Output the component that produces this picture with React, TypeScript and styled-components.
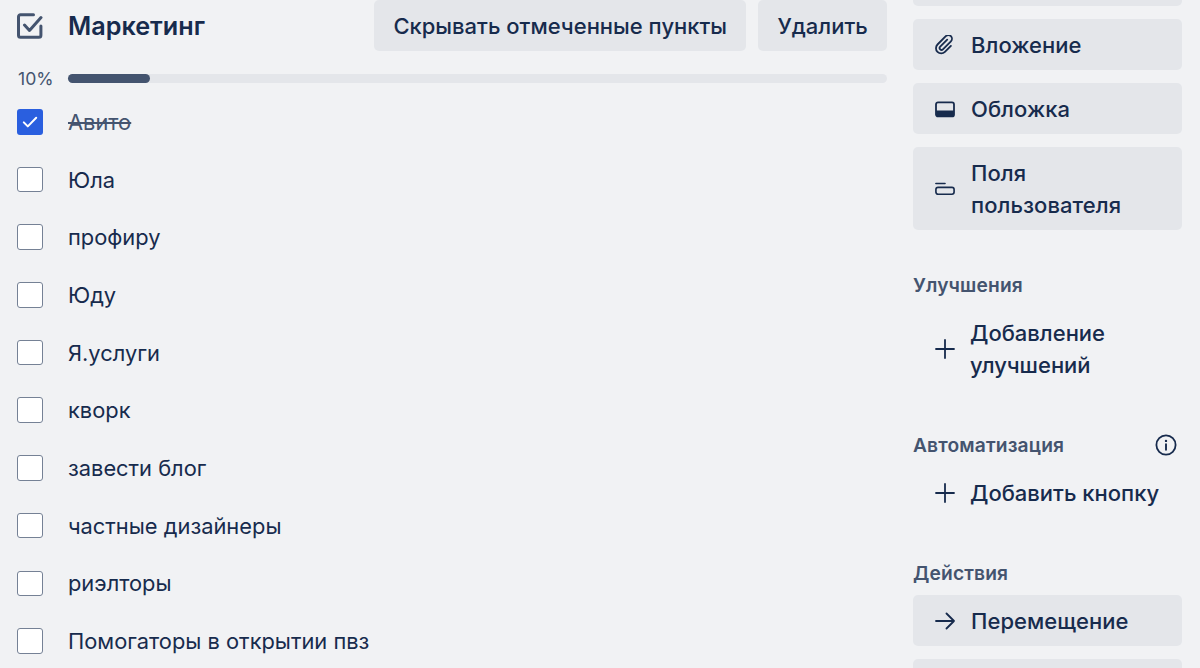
import React from 'react';
import styled, { createGlobalStyle } from 'styled-components';

const GlobalStyle = createGlobalStyle`
  html, body {
    margin: 0;
    padding: 0;
    background: #f1f2f4;
  }
  * {
    box-sizing: border-box;
  }
`;

const Page = styled.div`
  display: flex;
  gap: 26px;
  width: 1200px;
  height: 668px;
  overflow: hidden;
  padding: 0 18px 0 17px;
  background: #f1f2f4;
  color: #172b4d;
  font-family: 'Inter', 'Liberation Sans', sans-serif;
  font-size: 22px;
  line-height: 32px;
`;

const Main = styled.main`
  flex: 1;
  min-width: 0;
`;

const Header = styled.div`
  display: flex;
  align-items: center;
  height: 51px;
  gap: 12px;
`;

const HeaderIcon = styled.div`
  width: 39px;
  display: flex;
  color: #44546f;
`;

const Title = styled.h2`
  flex: 1;
  margin: 0;
  font-size: 25.2px;
  font-weight: 600;
  line-height: 32px;
`;

const Button = styled.button`
  height: 51.2px;
  padding: 0 19.2px;
  border: none;
  border-radius: 5px;
  background: #e4e6ea;
  color: #172b4d;
  font: inherit;
  font-weight: 500;
`;

const Progress = styled.div`
  display: flex;
  align-items: center;
  height: 42px;
  padding-top: 13px;
`;

const Percent = styled.span`
  width: 51px;
  padding-left: 1px;
  color: #44546f;
  font-size: 17.6px;
`;

const Track = styled.div`
  flex: 1;
  height: 9px;
  border-radius: 5px;
  background: #e4e6ea;
`;

const Fill = styled.div`
  height: 100%;
  border-radius: 5px;
  background: #44546f;
`;

const Row = styled.div`
  display: flex;
  align-items: center;
  height: 57.7px;
`;

const Box = styled.span<{ $checked?: boolean }>`
  width: 25.6px;
  height: 25.6px;
  flex: none;
  display: flex;
  align-items: center;
  justify-content: center;
  margin-right: 25.4px;
  border-radius: 3px;
  border: ${p => (p.$checked ? 'none' : '1.6px solid #758195')};
  background: ${p => (p.$checked ? '#2a5fdf' : '#ffffff')};
`;

const ItemText = styled.span<{ $done?: boolean }>`
  font-size: 21.85px;
  color: ${p => (p.$done ? '#44546f' : '#172b4d')};
  text-decoration: ${p => (p.$done ? 'line-through' : 'none')};
`;

const Sidebar = styled.aside`
  width: 269px;
  flex: none;
  align-self: flex-start;
  margin-top: -44.8px;
  display: flex;
  flex-direction: column;
`;

const ActionStack = styled.div`
  display: flex;
  flex-direction: column;
  gap: 12.8px;
`;

const ActionButton = styled.div<{ $plain?: boolean }>`
  display: flex;
  align-items: center;
  gap: ${p => (p.$plain ? '15px' : '16px')};
  min-height: 51.2px;
  padding: 9.6px 8px 9.6px 22px;
  border-radius: 5px;
  background: ${p => (p.$plain ? 'transparent' : '#e4e6ea')};
  font-weight: 500;
  letter-spacing: ${p => (p.$plain ? '0' : '0.05px')};
`;

const IconSlot = styled.span`
  width: 20px;
  height: 20px;
  flex: none;
  display: flex;
`;

const SectionLabel = styled.div`
  display: flex;
  align-items: center;
  justify-content: space-between;
  height: 32px;
  margin: 38.4px 0 6.4px;
  color: #44546f;
  font-size: 19.2px;
  font-weight: 600;
  letter-spacing: 0.15px;
`;

const InfoSlot = styled.span`
  display: flex;
  margin-right: 5px;
  color: #172b4d;
`;

const ChecklistIcon = () => (
  <svg width="26" height="26" viewBox="0 0 26 26" fill="none">
    <path
      d="M16.5 1.8H3.5a2 2 0 0 0-2 2v18.4a2 2 0 0 0 2 2h18.4a2 2 0 0 0 2-2V13"
      stroke="currentColor"
      strokeWidth="3"
      strokeLinecap="round"
    />
    <path
      d="M7.5 12l5 5.5L24 4.5"
      stroke="currentColor"
      strokeWidth="3"
      strokeLinecap="round"
      strokeLinejoin="round"
    />
  </svg>
);

const CheckMark = () => (
  <svg width="16" height="12" viewBox="0 0 16 12" fill="none">
    <path
      d="M1.8 6.4l4 4L14.2 1.8"
      stroke="#fff"
      strokeWidth="2"
      strokeLinecap="round"
      strokeLinejoin="round"
    />
  </svg>
);

const PaperclipIcon = () => (
  <svg width="20" height="20" viewBox="0 0 20 20" fill="none">
    <path
      d="M12.2 4.6 5.2 11.6a1.9 1.9 0 0 0 2.7 2.7l8-8a3.6 3.6 0 0 0-5.1-5.1l-8.3 8.3a5.2 5.2 0 0 0 7.4 7.4l6-6"
      stroke="#172b4d"
      strokeWidth="1.8"
      strokeLinecap="round"
      strokeLinejoin="round"
    />
  </svg>
);

const CoverIcon = () => (
  <svg width="20" height="20" viewBox="0 0 20 20" fill="none">
    <rect x="1" y="3.4" width="18" height="14" rx="2" stroke="#172b4d" strokeWidth="1.8" />
    <path d="M1 11.4h18v4a2 2 0 0 1-2 2H3a2 2 0 0 1-2-2z" fill="#172b4d" />
  </svg>
);

const FieldsIcon = () => (
  <svg width="22" height="20" viewBox="0 0 22 20" fill="none">
    <path d="M1 4h10" stroke="#172b4d" strokeWidth="1.8" strokeLinecap="round" />
    <rect x="1" y="8.2" width="20" height="7.6" rx="2.4" stroke="#172b4d" strokeWidth="1.8" />
  </svg>
);

const PlusIcon = () => (
  <svg width="20" height="20" viewBox="0 0 20 20" fill="none">
    <path d="M10 1v18M1 10h18" stroke="#172b4d" strokeWidth="1.8" strokeLinecap="round" />
  </svg>
);

const ArrowIcon = () => (
  <svg width="20" height="20" viewBox="0 0 20 20" fill="none">
    <path
      d="M1 10h18M11.5 2.5 19 10l-7.5 7.5"
      stroke="#172b4d"
      strokeWidth="1.8"
      strokeLinecap="round"
      strokeLinejoin="round"
    />
  </svg>
);

const InfoIcon = () => (
  <svg width="22" height="22" viewBox="0 0 22 22" fill="none">
    <circle cx="11" cy="11" r="9.6" stroke="currentColor" strokeWidth="1.8" />
    <circle cx="11" cy="6.9" r="1.2" fill="currentColor" />
    <path d="M11 10.2v5.6" stroke="currentColor" strokeWidth="1.9" strokeLinecap="round" />
  </svg>
);

const items = [
  'Юла',
  'профиру',
  'Юду',
  'Я.услуги',
  'кворк',
  'завести блог',
  'частные дизайнеры',
  'риэлторы',
  'Помогаторы в открытии пвз',
];

const App: React.FC = () => {
  return (
    <Page>
      <GlobalStyle />
      <Main>
        <Header>
          <HeaderIcon>
            <ChecklistIcon />
          </HeaderIcon>
          <Title>Маркетинг</Title>
          <Button>Скрывать отмеченные пункты</Button>
          <Button>Удалить</Button>
        </Header>
        <Progress>
          <Percent>10%</Percent>
          <Track>
            <Fill style={{ width: '10%' }} />
          </Track>
        </Progress>
        <Row>
          <Box $checked>
            <CheckMark />
          </Box>
          <ItemText $done>Авито</ItemText>
        </Row>
        {items.map(item => (
          <Row key={item}>
            <Box />
            <ItemText>{item}</ItemText>
          </Row>
        ))}
      </Main>
      <Sidebar>
        <ActionStack>
          <ActionButton />
          <ActionButton>
            <IconSlot>
              <PaperclipIcon />
            </IconSlot>
            Вложение
          </ActionButton>
          <ActionButton>
            <IconSlot>
              <CoverIcon />
            </IconSlot>
            Обложка
          </ActionButton>
          <ActionButton>
            <IconSlot>
              <FieldsIcon />
            </IconSlot>
            Поля пользователя
          </ActionButton>
        </ActionStack>
        <SectionLabel>Улучшения</SectionLabel>
        <ActionButton $plain>
          <IconSlot>
            <PlusIcon />
          </IconSlot>
          Добавление улучшений
        </ActionButton>
        <SectionLabel>
          Автоматизация
          <InfoSlot>
            <InfoIcon />
          </InfoSlot>
        </SectionLabel>
        <ActionButton $plain>
          <IconSlot>
            <PlusIcon />
          </IconSlot>
          Добавить кнопку
        </ActionButton>
        <SectionLabel>Действия</SectionLabel>
        <ActionStack>
          <ActionButton>
            <IconSlot>
              <ArrowIcon />
            </IconSlot>
            Перемещение
          </ActionButton>
          <ActionButton />
        </ActionStack>
      </Sidebar>
    </Page>
  );
};

export default App;
